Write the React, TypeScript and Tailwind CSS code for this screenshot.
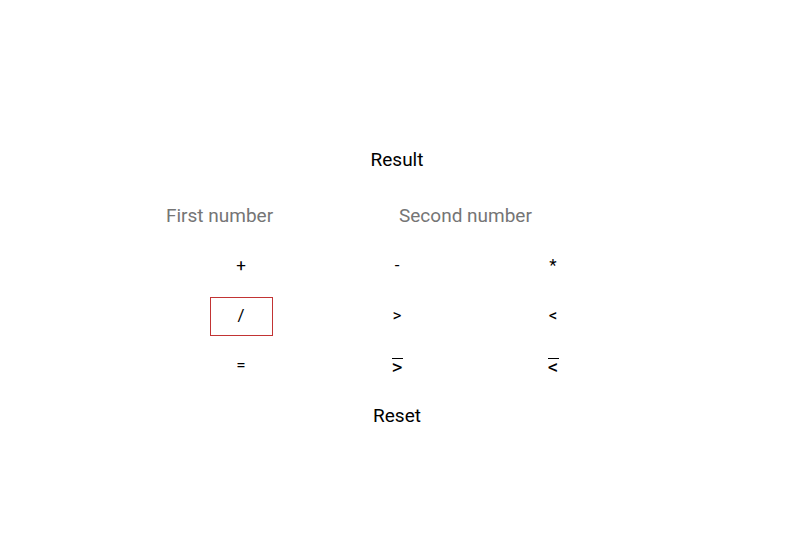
import { useState } from 'react';

const ops = ['+', '-', '*', '/', '>', '<', '=', '≥', '≤'];

function Glyph({ op }: { op: string }) {
  if (op === '≥' || op === '≤')
    return (
      <span className="inline-flex flex-col items-center">
        <span className="h-px w-[11px] bg-black" />
        <span className="mt-[1px] text-[21px] leading-[15px]">{op === '≥' ? '>' : '<'}</span>
      </span>
    );
  return <span>{op}</span>;
}

export default function App() {
  const [active] = useState('/');

  return (
    <div className="min-h-screen w-full bg-white text-black font-['Roboto',sans-serif]">
      <div className="mx-auto flex w-[468px] flex-col items-center pt-[146px] translate-x-[2px]">
        {/* Result */}
        <div className="h-[28px] text-[19px] leading-[28px]">Result</div>

        {/* Inputs */}
        <div className="mt-[21px] flex w-full">
          <input
            className="h-[40px] w-[233px] px-[3px] text-[19px] outline-none placeholder:text-[#757575]"
            placeholder="First number"
          />
          <input
            className="h-[40px] w-[233px] px-[3px] text-[19px] outline-none placeholder:text-[#757575]"
            placeholder="Second number"
          />
        </div>

        {/* Operators */}
        <div className="mt-[6px] grid w-full grid-cols-3">
          {ops.map((op) => (
            <div key={op} className="flex h-[50px] items-center justify-center">
              <button
                className={`flex h-[39px] w-[63px] items-center justify-center text-[17px] ${
                  op === active ? 'border border-[#c23434]' : 'border border-transparent'
                }`}
              >
                <Glyph op={op} />
              </button>
            </div>
          ))}
        </div>

        {/* Reset */}
        <div className="flex h-[50px] items-center">
          <button className="text-[19px]">Reset</button>
        </div>
      </div>
    </div>
  );
}
